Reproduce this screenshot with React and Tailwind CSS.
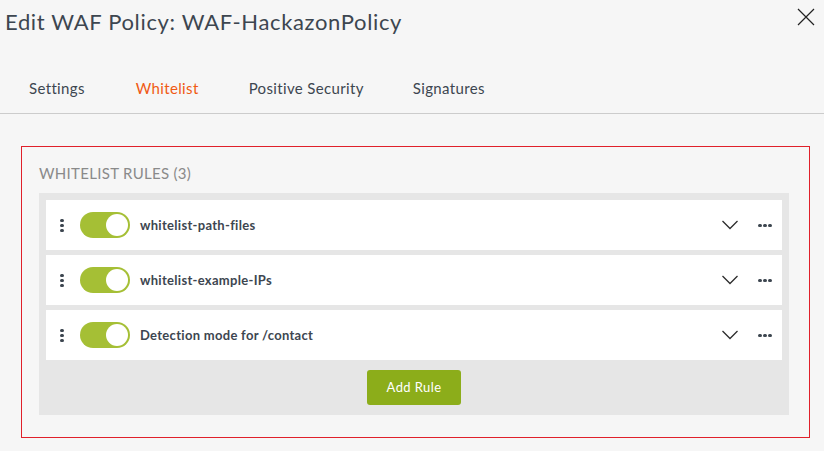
import React from "react";

const rules = ["whitelist-path-files", "whitelist-example-IPs", "Detection mode for /contact"];

function Row({ name }) {
  return (
    <div className="flex h-[50px] items-center bg-white">
      <div className="ml-[14px] flex w-[4px] flex-col items-center gap-[2px]">
        <span className="h-[3px] w-[4px] rounded-full bg-[#3d4650]" />
        <span className="h-[3px] w-[4px] rounded-full bg-[#3d4650]" />
        <span className="h-[3px] w-[4px] rounded-full bg-[#3d4650]" />
      </div>
      <div className="ml-[16px] flex h-[26px] w-[50px] items-center justify-end rounded-full bg-[#a5bf35] pr-[2px]">
        <span className="h-[22px] w-[22px] rounded-full bg-white" />
      </div>
      <div className="ml-[10px] flex-1 pt-[2px] text-[13px] font-bold tracking-[0.3px] text-[#3d4650]">{name}</div>
      <svg width="16" height="10" viewBox="0 0 16 10" className="mr-[20px]">
        <path d="M0.5 1 L8 8.5 L15.5 1" fill="none" stroke="#2d2d2d" strokeWidth="1.3" />
      </svg>
      <div className="mr-[10px] flex gap-[1px]">
        <span className="h-[3px] w-[4px] rounded-full bg-[#3d4650]" />
        <span className="h-[3px] w-[4px] rounded-full bg-[#3d4650]" />
        <span className="h-[3px] w-[4px] rounded-full bg-[#3d4650]" />
      </div>
    </div>
  );
}

export default function App() {
  return (
    <div className="h-[451px] w-[824px] overflow-hidden bg-[#f6f6f6] font-['Lato',sans-serif]">
      <div className="flex items-start justify-between">
        <h1 className="ml-[5px] mt-[6px] text-[22px] font-normal leading-[32px] tracking-[0.65px] text-[#3d4650]">
          Edit WAF Policy: WAF-HackazonPolicy
        </h1>
        <svg width="20" height="20" viewBox="0 0 20 20" className="mr-[8px] mt-[7px]">
          <path d="M2 2 L18 18 M18 2 L2 18" stroke="#222" strokeWidth="1.2" />
        </svg>
      </div>
      <div className="mt-[37px] flex h-[39px] items-start border-b border-[#cccccc] pl-[29px] text-[15px] tracking-[0.35px] text-[#3d4650]">
        <span className="mt-[2px]">Settings</span>
        <span className="ml-[51px] mt-[2px] text-[#f05a14]">Whitelist</span>
        <span className="ml-[50px] mt-[2px]">Positive Security</span>
        <span className="ml-[49px] mt-[2px]">Signatures</span>
      </div>
      <div className="ml-[21px] mt-[32px] h-[292px] w-[789px] border border-[#e0202a] pl-[17px] pr-[20px]">
        <div className="mt-[17px] text-[15px] leading-[18px] tracking-[0.3px] text-[#8a8a8a]">WHITELIST RULES (3)</div>
        <div className="mt-[11px] bg-[#e6e6e6] px-[7px] pt-[7px] pb-[10px]">
          <div className="flex flex-col gap-[5px]">
            {rules.map((r) => (
              <Row key={r} name={r} />
            ))}
          </div>
          <div className="mt-[10px] flex justify-center">
            <button className="h-[35px] w-[94px] rounded-[3px] bg-[#8cad1a] text-[13px] tracking-[0.4px] text-white">Add Rule</button>
          </div>
        </div>
      </div>
    </div>
  );
}
